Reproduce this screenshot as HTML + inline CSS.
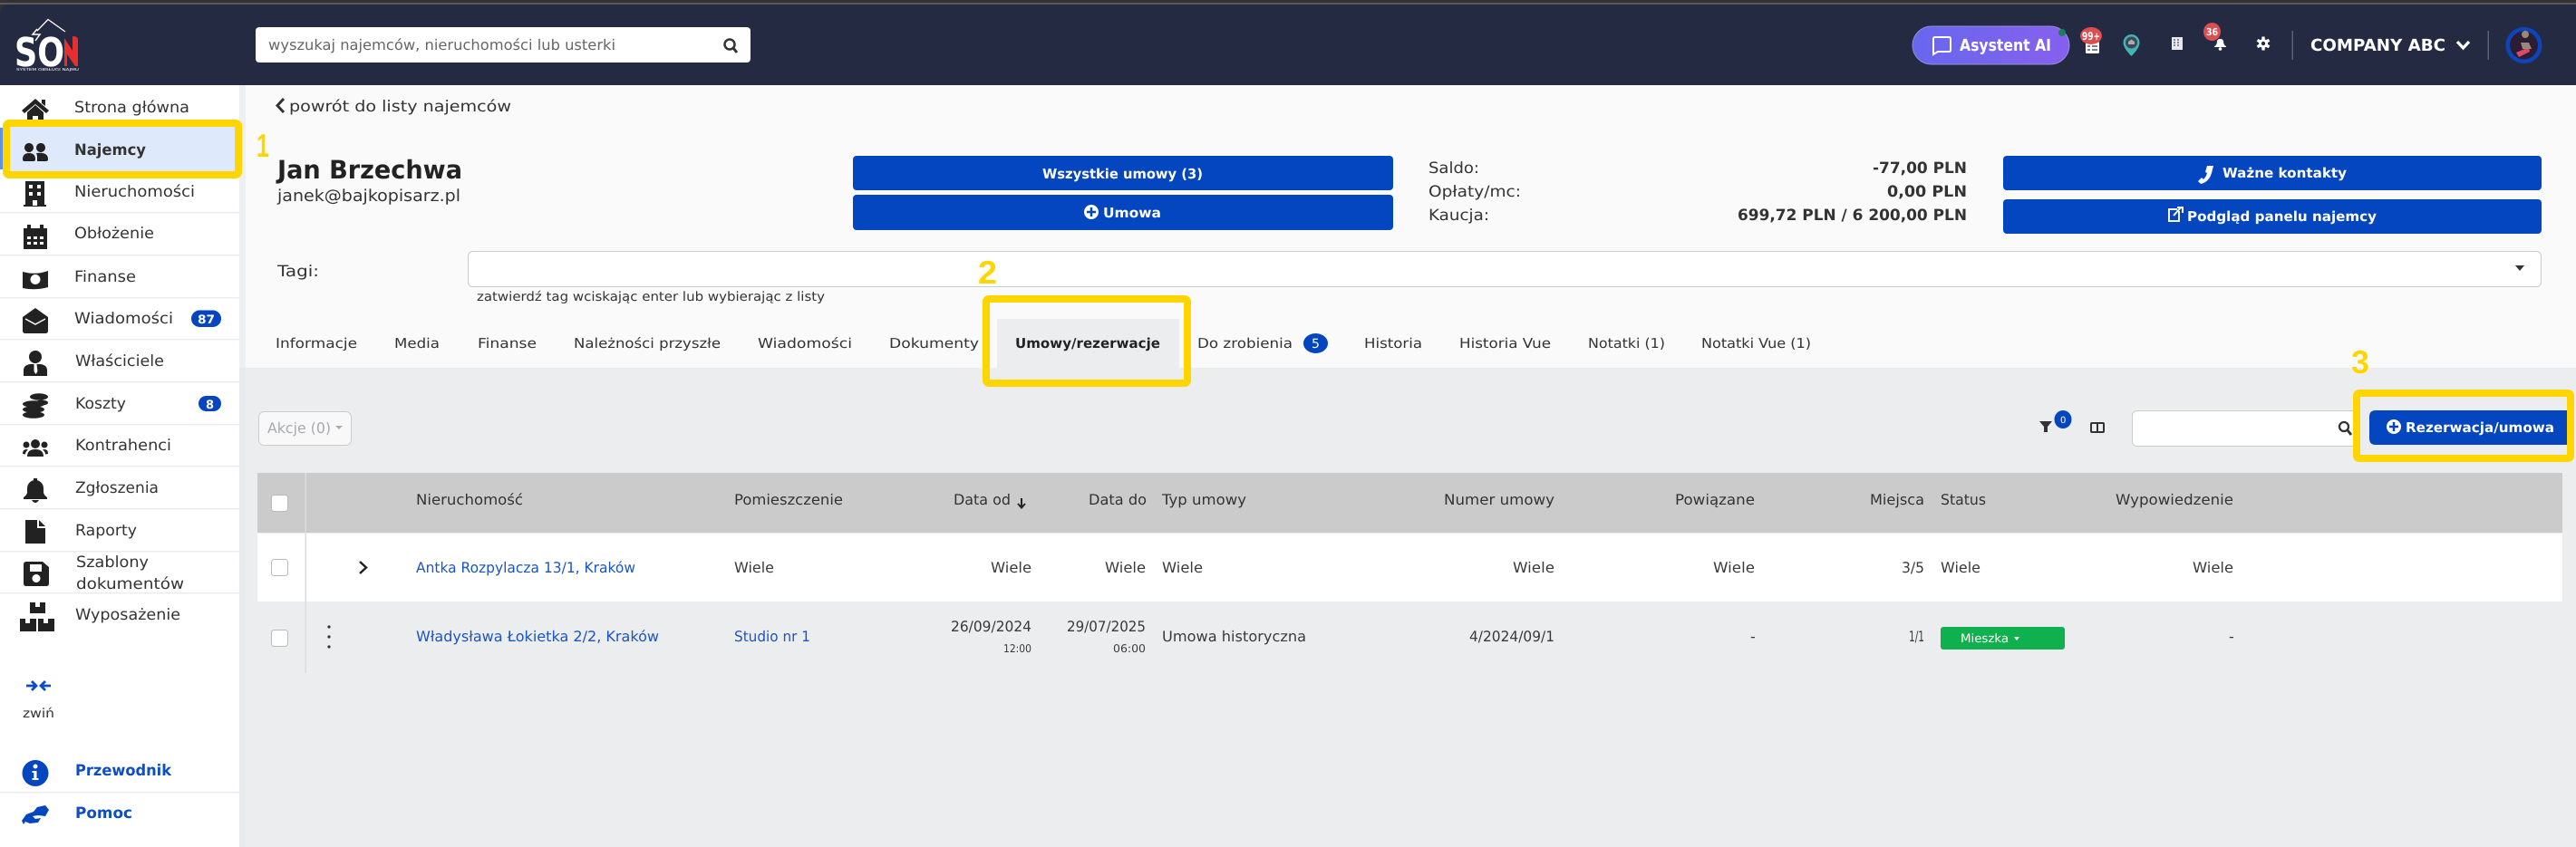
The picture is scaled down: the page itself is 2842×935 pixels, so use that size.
<!DOCTYPE html>
<html lang="pl">
<head>
<meta charset="utf-8">
<title>Jan Brzechwa - Umowy/rezerwacje</title>
<style>
html,body{margin:0;padding:0;width:2842px;height:935px;overflow:hidden;background:#ecedef}
svg{display:block}
text{font-family:"DejaVu Sans","Liberation Sans",sans-serif;fill:#333;font-size:17px;text-rendering:geometricPrecision}
.b{font-weight:700}
.w{fill:#fff}
.l{fill:#1b55c4}
.h{font-size:16px;fill:#333}
.t{font-size:16px;fill:#3a3a3a}
.nb{font-weight:700;fill:#0d4ec4}
.y{font-family:"Liberation Sans",sans-serif;font-size:36px;font-weight:700;fill:#ffd500;stroke:#fff;stroke-width:1.2;paint-order:stroke}
</style>
</head>
<body>
<svg xmlns="http://www.w3.org/2000/svg" width="2842" height="935" viewBox="0 0 2842 935">
<!-- backgrounds -->
<rect width="2842" height="935" fill="#ecedef"/>
<rect x="264" y="94" width="2578" height="312" fill="#fafafa"/>
<rect x="264" y="94" width="7" height="841" fill="#e4e5e8" opacity=".55"/>
<rect y="0" width="2842" height="94" fill="#333"/>
<rect y="3" width="2842" height="2" fill="#5a5a5a"/>
<path d="M0 94V16Q0 5 12 5H2842V94Z" fill="#252a43"/>
<!-- sidebar -->
<rect x="0" y="94" width="264" height="841" fill="#fff"/>
<g fill="#ececee">
<rect y="234" width="264" height="1.5"/><rect y="281" width="264" height="1.5"/><rect y="328" width="264" height="1.5"/><rect y="374" width="264" height="1.5"/><rect y="421" width="264" height="1.5"/><rect y="468" width="264" height="1.5"/><rect y="514" width="264" height="1.5"/><rect y="561" width="264" height="1.5"/><rect y="608" width="264" height="1.5"/><rect y="654" width="264" height="1.5"/><rect y="874" width="264" height="1.5"/>
</g>
<!-- logo -->
<path d="M41 34L53 21.500L72 35" fill="none" stroke="#fff" stroke-width="1.300"/>
<path d="M41 32L36 38L44 38L39 45" fill="none" stroke="#fff" stroke-width="1.500"/>
<text x="16" y="73" class="b w" style="font-size:44px" textLength="55" lengthAdjust="spacingAndGlyphs">SO</text>
<path d="M71 73V42L80 56V40Q86 40 86 44V73H83L74 60V73Z" fill="#e5302f"/>
<text x="18" y="78" class="w" style="font-size:4px" textLength="69" lengthAdjust="spacingAndGlyphs">SYSTEM OBSŁUGI NAJMU</text>
<!-- search -->
<rect x="282" y="30" width="546" height="39" rx="4" fill="#fff"/>
<text x="296" y="55" style="font-size:16px;fill:#666" textLength="383" lengthAdjust="spacingAndGlyphs">wyszukaj najemców, nieruchomości lub usterki</text>
<circle cx="805" cy="49" r="5.500" fill="none" stroke="#333" stroke-width="2.500"/><path d="M809 53l4 5" stroke="#333" stroke-width="3"/>
<!-- header right -->
<defs><linearGradient id="g" x1="0" x2="1" y1="0" y2="0"><stop offset="0" stop-color="#6767ee"/><stop offset="1" stop-color="#8760ee"/></linearGradient></defs>
<rect x="2110" y="29" width="173" height="42" rx="21" fill="url(#g)" stroke="#8f8fe0"/>
<circle cx="2275" cy="36" r="4" fill="#1a7f5a"/>
<path d="M2133 43q0-2 2-2h15q2 0 2 2v12q0 2-2 2h-12l-5 3Z" fill="none" stroke="#fff" stroke-width="2"/>
<text x="2162" y="56" class="w" style="font-weight:600;font-size:18px" textLength="101" lengthAdjust="spacingAndGlyphs">Asystent AI</text>
<rect x="2301" y="46" width="15" height="13" rx="1.500" fill="#fff"/><path d="M2303 51h3m2 0h6M2303 55h3m2 0h6" stroke="#556" stroke-width="1.400"/>
<ellipse cx="2307" cy="39.500" rx="12" ry="9.500" fill="#dc4f50"/>
<text x="2297" y="44" class="b w" style="font-size:12px" textLength="20" lengthAdjust="spacingAndGlyphs">99+</text>
<path d="M2351.500 62q-9-9-9-15a9 9 0 0 1 18 0q0 6-9 15Z" fill="#3fb6b0"/><circle cx="2351.500" cy="47" r="6.500" fill="#3f4658"/><path d="M2348 49v-3l3.500-2.500 3.500 2.500v3Z" fill="#aaa"/>
<rect x="2396" y="41" width="12" height="14" fill="#e8e8f0"/><path d="M2398 44h2m2 0h2m-6 3h2m2 0h2m-6 3h2m2 0h2" stroke="#667" stroke-width="1.500"/>
<path d="M2443 51q3-1 3-6a4 4 0 0 1 7 0q0 5 3 6v1h-13Z" fill="#fff"/><circle cx="2449.500" cy="54" r="1.800" fill="#fff"/>
<ellipse cx="2440.500" cy="35" rx="9.500" ry="10" fill="#dc4f50"/>
<text x="2434" y="39" class="b w" style="font-size:11px" textLength="13" lengthAdjust="spacingAndGlyphs">36</text>
<path d="M2497 40.500v15M2490.500 44.300l13 7.500M2490.500 51.700l13-7.500" stroke="#fff" stroke-width="3.400"/>
<circle cx="2497" cy="48" r="5" fill="#fff"/><circle cx="2497" cy="48" r="2.200" fill="#252a43"/>
<rect x="2528.500" y="34" width="1.500" height="32" fill="#5c6076"/>
<text x="2549" y="56" class="w" style="font-weight:600;font-size:18px" textLength="149" lengthAdjust="spacingAndGlyphs">COMPANY ABC</text>
<path d="M2711 46l6.500 7 6.500-7" fill="none" stroke="#fff" stroke-width="3.200"/>
<rect x="2744.500" y="34" width="1.500" height="32" fill="#5c6076"/>
<circle cx="2784.500" cy="50" r="20" fill="#0c46bd"/><circle cx="2784.500" cy="50" r="15.500" fill="#2a1d34"/>
<path d="M2776 58l14-6 1 5-12 6Z" fill="#d94a6a"/><path d="M2786 42a4 4 0 1 1 .01 0M2781 47h9l3 7h-10Z" fill="#9b8878"/>
<!-- sidebar icons -->
<g fill="#222">
<path d="M24 122L39 109 54 122 51 125 39 115 27 125ZM46 110h4v7l-4-3ZM30 124L39 116 48 124V137H42V128H36V137H30Z"/>
<path fill-rule="evenodd" d="M28 200H49V226H51V228H26V226H28ZM32 204v4h4v-4ZM41 204v4h4v-4ZM32 212v4h4v-4ZM41 212v4h4v-4ZM36 221v6h5v-6Z"/>
<path fill-rule="evenodd" d="M26 252h4v-4h4v4h10v-4h4v4h4v23H26ZM30 261v3h4v-3ZM37 261v3h4v-3ZM44 261v3h4v-3ZM30 267v3h4v-3ZM37 267v3h4v-3ZM44 267v3h4v-3Z"/>
<path fill-rule="evenodd" d="M25 300q14 4 28-1V317q-14 4-28 1ZM39 303a5.500 5.500 0 1 0 .01 0Z"/>
<path fill-rule="evenodd" d="M25 350L39 340 53 350V365q0 3-3 3H28q-3 0-3-3Z"/>
<path d="M28 352L39 358 50 352" fill="none" stroke="#fff" stroke-width="1.500"/>
<circle cx="39" cy="394" r="7"/><path d="M26 415v-6q0-6 7-7h12q7 1 7 7v6Z"/>
<path d="M37.500 402h3l1 8-2 3-2-3Z" fill="#fff"/>
<ellipse cx="43" cy="438" rx="10" ry="3.800"/><ellipse cx="46" cy="444.500" rx="7" ry="3"/><ellipse cx="37" cy="446" rx="12" ry="3.800"/><ellipse cx="37" cy="452" rx="12" ry="3.800"/><ellipse cx="37" cy="458" rx="12" ry="3.800"/>
<circle cx="39" cy="490" r="5"/><circle cx="29" cy="491" r="3.500"/><circle cx="49" cy="491" r="3.500"/><path d="M30 504q0-8 9-8t9 8ZM25 501q0-5 4-5l2 .5q-3 2-3 5ZM53 501q0-5-4-5l-2 .5q3 2 3 5Z"/>
<path d="M26 549q3-2 4-5v-5a9 9 0 0 1 18 0v5q1 3 4 5v2H26ZM35 552h8q-4 6-8 0ZM37 528h4v4h-4Z"/>
<path d="M28 574h13v9h9v17H28ZM43 574l7 7h-7Z"/>
<path fill-rule="evenodd" d="M26 623q0-3 3-3H47l7 6V644q0 3-3 3H29q-3 0-3-3ZM33 623v8h13v-8ZM40 634a4.500 4.500 0 1 0 .01 0Z"/>
<path fill-rule="evenodd" d="M33 665h17v12H33ZM22 683h18v14H22ZM42 683h18v14H42ZM39 665v5h5v-5ZM28 683v5h5v-5ZM48 683v5h5v-5Z"/>
</g>
<!-- arrows -->
<path d="M29 757h10M35 752l5 5-5 5M56 757h-10M50 752l-5 5 5 5" fill="none" stroke="#0d4ec4" stroke-width="2.800"/>
<circle cx="39" cy="853.500" r="14.500" fill="#0446bf"/><circle cx="39" cy="846" r="2.500" fill="#fff"/><path d="M35.500 851h5v8h2v2h-7v-2h1.800v-6h-1.800Z" fill="#fff"/>
<path d="M24 906l5-7 8-3 4-5 9-2 4 5-4 7-8-1-6 1 3 3 6-1-3 5-9 1-5-2-2 3Z" fill="#0446bf"/>
<!-- sidebar labels -->
<text x="82" y="124" textLength="127" lengthAdjust="spacingAndGlyphs">Strona główna</text>
<text x="82" y="217" textLength="133" lengthAdjust="spacingAndGlyphs">Nieruchomości</text>
<text x="82" y="263" textLength="88" lengthAdjust="spacingAndGlyphs">Obłożenie</text>
<text x="82" y="311" textLength="68" lengthAdjust="spacingAndGlyphs">Finanse</text>
<text x="82" y="357" textLength="109" lengthAdjust="spacingAndGlyphs">Wiadomości</text>
<text x="83" y="404" textLength="98" lengthAdjust="spacingAndGlyphs">Właściciele</text>
<text x="83" y="451" textLength="56" lengthAdjust="spacingAndGlyphs">Koszty</text>
<text x="83" y="497" textLength="106" lengthAdjust="spacingAndGlyphs">Kontrahenci</text>
<text x="83" y="544" textLength="92" lengthAdjust="spacingAndGlyphs">Zgłoszenia</text>
<text x="83" y="591" textLength="68" lengthAdjust="spacingAndGlyphs">Raporty</text>
<text x="84" y="626" textLength="80" lengthAdjust="spacingAndGlyphs">Szablony</text>
<text x="84" y="650" textLength="119" lengthAdjust="spacingAndGlyphs">dokumentów</text>
<text x="83" y="684" textLength="116" lengthAdjust="spacingAndGlyphs">Wyposażenie</text>
<text x="25" y="792" style="font-size:14px" textLength="35" lengthAdjust="spacingAndGlyphs">zwiń</text>
<text x="83" y="856" class="nb" textLength="106" lengthAdjust="spacingAndGlyphs">Przewodnik</text>
<text x="83" y="903" class="nb" textLength="63" lengthAdjust="spacingAndGlyphs">Pomoc</text>
<rect x="211" y="342.500" width="33" height="18.500" rx="9.200" fill="#0446bf"/>
<text x="218" y="357" class="b w" style="font-size:13px" textLength="19" lengthAdjust="spacingAndGlyphs">87</text>
<rect x="219" y="437" width="25" height="17" rx="8.500" fill="#0446bf"/>
<text x="227" y="451" class="b w" style="font-size:13px">8</text>
<!-- yellow 1 -->
<rect x="0" y="141" width="4" height="46" fill="#5b8fe8"/>
<rect x="7" y="136" width="256" height="57" rx="3" fill="#dee9fb" stroke="#ffd500" stroke-width="8"/>
<g fill="#222"><path d="M27 178q-2 0-2-2 0-7 7-7t7 7q0 2-2 2ZM41 178V173q0-2-1-4 2-.3 4-.3 9 0 9 7 0 2.300-2.500 2.300ZM32 158a5 5 0 1 1-.01 0ZM45 158a5 5 0 1 1-.01 0Z"/></g>
<text x="82" y="171" class="b" textLength="79" lengthAdjust="spacingAndGlyphs">Najemcy</text>
<text x="283" y="173" class="y" textLength="14" lengthAdjust="spacingAndGlyphs">1</text>
<!-- top section -->
<path d="M313 109l-7 7.500 7 7.500" fill="none" stroke="#333" stroke-width="3"/>
<text x="319" y="123" textLength="245" lengthAdjust="spacingAndGlyphs">powrót do listy najemców</text>
<text x="306" y="197" class="b" style="font-size:28px;fill:#222" textLength="204" lengthAdjust="spacingAndGlyphs">Jan Brzechwa</text>
<text x="306" y="222" style="font-size:18px" textLength="202" lengthAdjust="spacingAndGlyphs">janek@bajkopisarz.pl</text>
<!-- left buttons -->
<rect x="941" y="172" width="596" height="38" rx="4" fill="#0446bf"/>
<rect x="941" y="215" width="596" height="39" rx="4" fill="#0446bf"/>
<text x="1150" y="197" class="b w" style="font-size:15px" textLength="177" lengthAdjust="spacingAndGlyphs">Wszystkie umowy (3)</text>
<circle cx="1204" cy="234" r="8" fill="#fff"/><path d="M1199 234h10M1204 229v10" stroke="#0446bf" stroke-width="2.500"/>
<text x="1217" y="240" class="b w" style="font-size:15px" textLength="64" lengthAdjust="spacingAndGlyphs">Umowa</text>
<!-- balances -->
<text x="1576" y="191" textLength="56" lengthAdjust="spacingAndGlyphs">Saldo:</text>
<text x="1576" y="217" textLength="102" lengthAdjust="spacingAndGlyphs">Opłaty/mc:</text>
<text x="1576" y="243" textLength="67" lengthAdjust="spacingAndGlyphs">Kaucja:</text>
<text x="2066" y="191" class="b" textLength="104" lengthAdjust="spacingAndGlyphs">-77,00 PLN</text>
<text x="2082" y="217" class="b" textLength="88" lengthAdjust="spacingAndGlyphs">0,00 PLN</text>
<text x="1917" y="243" class="b" textLength="253" lengthAdjust="spacingAndGlyphs">699,72 PLN / 6 200,00 PLN</text>
<!-- right buttons -->
<rect x="2210" y="172" width="594" height="38" rx="4" fill="#0446bf"/>
<rect x="2210" y="220" width="594" height="38" rx="4" fill="#0446bf"/>
<path d="M2442 183l-2 8q-3 10-12 12l-3-3 4-4 2 2q3-3 4-7l-2-1 2-7Z" fill="#fff"/>
<text x="2452" y="196" class="b w" style="font-size:15px" textLength="137" lengthAdjust="spacingAndGlyphs">Ważne kontakty</text>
<path d="M2404 233v11h-11v-13h9" fill="none" stroke="#fff" stroke-width="2"/><path d="M2398 238l8-9M2402 229h6v6" fill="none" stroke="#fff" stroke-width="2"/>
<text x="2413" y="244" class="b w" style="font-size:15px" textLength="209" lengthAdjust="spacingAndGlyphs">Podgląd panelu najemcy</text>
<!-- tags -->
<text x="306" y="305" textLength="46" lengthAdjust="spacingAndGlyphs">Tagi:</text>
<rect x="516.500" y="277.500" width="2287" height="39" rx="5" fill="#fff" stroke="#ccc"/>
<path d="M2775 293h10l-5 6Z" fill="#333"/>
<text x="526" y="332" style="font-size:14px" textLength="384" lengthAdjust="spacingAndGlyphs">zatwierdź tag wciskając enter lub wybierając z listy</text>
<!-- tabs -->
<rect x="1100" y="352" width="201" height="54" fill="#ecedef"/>
<g style="font-size:15px">
<text x="304" y="384" style="font-size:15px" textLength="90" lengthAdjust="spacingAndGlyphs">Informacje</text>
<text x="435" y="384" style="font-size:15px" textLength="50" lengthAdjust="spacingAndGlyphs">Media</text>
<text x="527" y="384" style="font-size:15px" textLength="65" lengthAdjust="spacingAndGlyphs">Finanse</text>
<text x="633" y="384" style="font-size:15px" textLength="162" lengthAdjust="spacingAndGlyphs">Należności przyszłe</text>
<text x="836" y="384" style="font-size:15px" textLength="104" lengthAdjust="spacingAndGlyphs">Wiadomości</text>
<text x="981" y="384" style="font-size:15px" textLength="99" lengthAdjust="spacingAndGlyphs">Dokumenty</text>
<text x="1120" y="384" class="b" style="font-size:15px;fill:#222" textLength="160" lengthAdjust="spacingAndGlyphs">Umowy/rezerwacje</text>
<text x="1321" y="384" style="font-size:15px" textLength="105" lengthAdjust="spacingAndGlyphs">Do zrobienia</text>
<text x="1505" y="384" style="font-size:15px" textLength="64" lengthAdjust="spacingAndGlyphs">Historia</text>
<text x="1610" y="384" style="font-size:15px" textLength="101" lengthAdjust="spacingAndGlyphs">Historia Vue</text>
<text x="1752" y="384" style="font-size:15px" textLength="85" lengthAdjust="spacingAndGlyphs">Notatki (1)</text>
<text x="1877" y="384" style="font-size:15px" textLength="121" lengthAdjust="spacingAndGlyphs">Notatki Vue (1)</text>
</g>
<ellipse cx="1451.500" cy="379" rx="13.500" ry="11" fill="#0446bf"/>
<text x="1447" y="384" class="w" style="font-size:14px">5</text>
<rect x="1088" y="330" width="222" height="93" rx="3" fill="none" stroke="#ffd500" stroke-width="8"/>
<text x="1079" y="313" class="y" textLength="21" lengthAdjust="spacingAndGlyphs">2</text>
<!-- toolbar -->
<rect x="285.500" y="454.500" width="102" height="37" rx="6" fill="#f8f8f9" stroke="#ccc"/>
<text x="295" y="478" style="font-size:16px;fill:#a8aab0" textLength="70" lengthAdjust="spacingAndGlyphs">Akcje (0)</text>
<path d="M370 470h8l-4 4Z" fill="#a8aab0"/>
<path d="M2250 465h14l-5 6v6h-4v-6Z" fill="#333"/>
<ellipse cx="2276" cy="463" rx="9.500" ry="10" fill="#0446bf"/><text x="2273" y="467" class="w" style="font-size:10px">0</text>
<rect x="2307" y="467" width="14" height="10" rx="1" fill="none" stroke="#333" stroke-width="2"/><path d="M2314 467v10" stroke="#333" stroke-width="2"/>
<rect x="2352.500" y="453.500" width="250" height="39" rx="5" fill="#fff" stroke="#ccc"/>
<circle cx="2586" cy="471" r="5" fill="none" stroke="#333" stroke-width="2.300"/><path d="M2590 475l4 5" stroke="#333" stroke-width="2.800"/>
<path d="M2621 453H2834V491H2621Q2614 491 2614 484V460Q2614 453 2621 453Z" fill="#0446bf"/>
<circle cx="2641" cy="471" r="8" fill="#fff"/><path d="M2636 471h10M2641 466v10" stroke="#0446bf" stroke-width="2.500"/>
<text x="2654" y="477" class="b w" style="font-size:15px" textLength="164" lengthAdjust="spacingAndGlyphs">Rezerwacja/umowa</text>
<rect x="2600" y="434" width="236" height="72" rx="3" fill="none" stroke="#ffd500" stroke-width="8"/>
<text x="2594" y="412" class="y" textLength="20" lengthAdjust="spacingAndGlyphs">3</text>
<!-- table -->
<rect x="284" y="522" width="2543" height="66" fill="#cbcbcb"/>
<rect x="284" y="589" width="2543" height="75" fill="#fff"/>
<rect x="336.500" y="522" width="1.500" height="221" fill="#dcdcde"/>
<rect x="299.500" y="546.500" width="18" height="18" rx="3" fill="#fff" stroke="#bbb"/>
<rect x="299.500" y="617.500" width="18" height="18" rx="3" fill="#fff" stroke="#bbb"/>
<rect x="299.500" y="695.500" width="18" height="18" rx="3" fill="#fff" stroke="#bbb"/>
<path d="M397 620l7 6.500-7 6.500" fill="none" stroke="#222" stroke-width="2.500"/>
<circle cx="363" cy="692" r="1.600" fill="#333"/><circle cx="363" cy="703" r="1.600" fill="#333"/><circle cx="363" cy="714" r="1.600" fill="#333"/>
<text class="h" x="459" y="557" textLength="118" lengthAdjust="spacingAndGlyphs">Nieruchomość</text>
<text class="h" x="810" y="557" textLength="120" lengthAdjust="spacingAndGlyphs">Pomieszczenie</text>
<text class="h" x="1052" y="557" textLength="63" lengthAdjust="spacingAndGlyphs">Data od</text>
<path d="M1127 550v10M1123 556l4 4.500 4-4.500" fill="none" stroke="#222" stroke-width="2"/>
<text class="h" x="1201" y="557" textLength="64" lengthAdjust="spacingAndGlyphs">Data do</text>
<text class="h" x="1282" y="557" textLength="93" lengthAdjust="spacingAndGlyphs">Typ umowy</text>
<text class="h" x="1593" y="557" textLength="122" lengthAdjust="spacingAndGlyphs">Numer umowy</text>
<text class="h" x="1848" y="557" textLength="88" lengthAdjust="spacingAndGlyphs">Powiązane</text>
<text class="h" x="2063" y="557" textLength="60" lengthAdjust="spacingAndGlyphs">Miejsca</text>
<text class="h" x="2141" y="557" textLength="50" lengthAdjust="spacingAndGlyphs">Status</text>
<text class="h" x="2334" y="557" textLength="130" lengthAdjust="spacingAndGlyphs">Wypowiedzenie</text>
<!-- row 1 -->
<text class="t l" x="459" y="632" style="fill:#1b55c4" textLength="242" lengthAdjust="spacingAndGlyphs">Antka Rozpylacza 13/1, Kraków</text>
<text class="t" x="810" y="632" textLength="44" lengthAdjust="spacingAndGlyphs">Wiele</text>
<text class="t" x="1093" y="632" textLength="45" lengthAdjust="spacingAndGlyphs">Wiele</text>
<text class="t" x="1219" y="632" textLength="45" lengthAdjust="spacingAndGlyphs">Wiele</text>
<text class="t" x="1282" y="632" textLength="45" lengthAdjust="spacingAndGlyphs">Wiele</text>
<text class="t" x="1669" y="632" textLength="46" lengthAdjust="spacingAndGlyphs">Wiele</text>
<text class="t" x="1890" y="632" textLength="46" lengthAdjust="spacingAndGlyphs">Wiele</text>
<text class="t" x="2098" y="632" textLength="25" lengthAdjust="spacingAndGlyphs">3/5</text>
<text class="t" x="2141" y="632" textLength="44" lengthAdjust="spacingAndGlyphs">Wiele</text>
<text class="t" x="2419" y="632" textLength="45" lengthAdjust="spacingAndGlyphs">Wiele</text>
<!-- row 2 -->
<text class="t" x="459" y="708" style="fill:#1b55c4" textLength="268" lengthAdjust="spacingAndGlyphs">Władysława Łokietka 2/2, Kraków</text>
<text class="t" x="810" y="708" style="fill:#1b55c4" textLength="84" lengthAdjust="spacingAndGlyphs">Studio nr 1</text>
<text class="t" x="1049" y="697" textLength="89" lengthAdjust="spacingAndGlyphs">26/09/2024</text>
<text class="t" x="1107" y="720" style="font-size:12px" textLength="31" lengthAdjust="spacingAndGlyphs">12:00</text>
<text class="t" x="1177" y="697" textLength="87" lengthAdjust="spacingAndGlyphs">29/07/2025</text>
<text class="t" x="1228" y="720" style="font-size:12px" textLength="36" lengthAdjust="spacingAndGlyphs">06:00</text>
<text class="t" x="1282" y="708" textLength="159" lengthAdjust="spacingAndGlyphs">Umowa historyczna</text>
<text class="t" x="1621" y="708" textLength="94" lengthAdjust="spacingAndGlyphs">4/2024/09/1</text>
<text class="t" x="1931" y="708">-</text>
<text class="t" x="2106" y="708" textLength="17" lengthAdjust="spacingAndGlyphs">1/1</text>
<rect x="2141" y="692" width="137" height="25" rx="3" fill="#0fb14f"/>
<text class="w" x="2163" y="709" style="font-size:13px" textLength="53" lengthAdjust="spacingAndGlyphs">Mieszka</text>
<path d="M2222 703h6l-3 4Z" fill="#fff"/>
<text class="t" x="2459" y="708">-</text>
</svg>
</body>
</html>
